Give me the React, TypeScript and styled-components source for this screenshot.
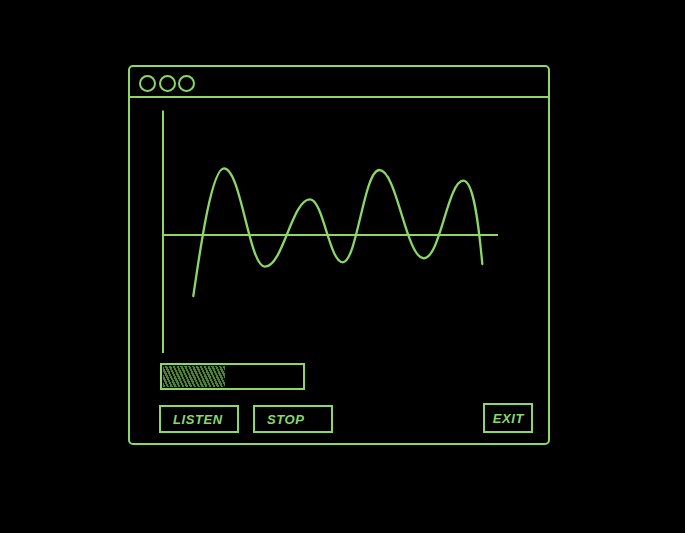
import React from "react";
import styled, { createGlobalStyle } from "styled-components";

const G = "#8dd766";

const Global = createGlobalStyle`
  html, body { margin: 0; padding: 0; background: #000; }
  body { font-family: "Liberation Sans", Arial, sans-serif; }
`;

const Page = styled.div`
  width: 685px;
  height: 533px;
  background: #000;
  padding: 65px 0 0 128px;
  box-sizing: border-box;
`;

const Window = styled.div`
  width: 422px;
  height: 380px;
  box-sizing: border-box;
  border: 2px solid ${G};
  border-radius: 5px;
  display: flex;
  flex-direction: column;
`;

const TitleBar = styled.div`
  height: 31px;
  box-sizing: border-box;
  border-bottom: 2px solid ${G};
  display: flex;
  align-items: center;
  gap: 2.5px;
  padding: 4px 0 0 9px;
`;

const Dot = styled.span`
  width: 17px;
  height: 17px;
  box-sizing: border-box;
  border: 2px solid ${G};
  border-radius: 50%;
`;

const Body = styled.div`
  flex: 1;
  display: flex;
  flex-direction: column;
  padding: 10px 15px 10px 29px;
`;

const Chart = styled.svg`
  display: block;
  width: 345px;
  height: 247px;
`;

const Progress = styled.div`
  margin: 8px 0 0 1px;
  width: 145px;
  height: 27px;
  box-sizing: border-box;
  border: 2px solid ${G};
  padding: 1px;
  display: flex;
`;

const Fill = styled.div`
  height: 100%;
  background: repeating-linear-gradient(
    65deg,
    #537f3c 0px,
    #537f3c 2px,
    #0d1408 2px,
    #0d1408 3.5px
  );
`;

const Actions = styled.div`
  margin-top: 13px;
  display: flex;
  align-items: flex-end;
  gap: 14px;
`;

const Button = styled.button<{ $wide?: boolean; $push?: boolean }>`
  background: transparent;
  border: 2px solid ${G};
  color: ${G};
  font-family: "Liberation Sans", Arial, sans-serif;
  font-weight: bold;
  font-style: italic;
  font-size: 13px;
  letter-spacing: 0.6px;
  text-transform: uppercase;
  box-sizing: border-box;
  height: ${(p) => (p.$wide ? 28 : 30)}px;
  width: ${(p) => (p.$wide ? "80px" : "auto")};
  padding: ${(p) => (p.$wide ? "1px 0 0 12px" : "1px 7px 0 8px")};
  text-align: ${(p) => (p.$wide ? "left" : "center")};
  margin-left: ${(p) => (p.$push ? "auto" : "0")};
  cursor: pointer;
`;

const wave =
  "M34.3 188 C40 150 52 60.3 65 60.3 C82 60.3 90 158.7 106 158.7 C124 158.7 133 91.3 151 91.3 C164 91.3 170.5 154.3 183.7 154.3 C198 154.3 205 62 220.3 62 C238 62 247 150.3 265 150.3 C281 150.3 289 72.7 304.3 72.7 C315 72.7 320 120 323.3 156";

export default function App() {
  return (
    <>
      <Global />
      <Page>
        <Window>
          <TitleBar>
            <Dot />
            <Dot />
            <Dot />
          </TitleBar>
          <Body>
            <Chart viewBox="0 0 345 247">
              <line x1="4" y1="2.5" x2="4" y2="245" stroke={G} strokeWidth="2" />
              <line x1="4" y1="127" x2="339" y2="127" stroke={G} strokeWidth="2" />
              <path d={wave} fill="none" stroke={G} strokeWidth="2.3" strokeLinecap="round" />
            </Chart>
            <Progress>
              <Fill style={{ width: `${(62 / 139) * 100}%` }} />
            </Progress>
            <Actions>
              <Button $wide>Listen</Button>
              <Button $wide>Stop</Button>
              <Button $push>Exit</Button>
            </Actions>
          </Body>
        </Window>
      </Page>
    </>
  );
}
